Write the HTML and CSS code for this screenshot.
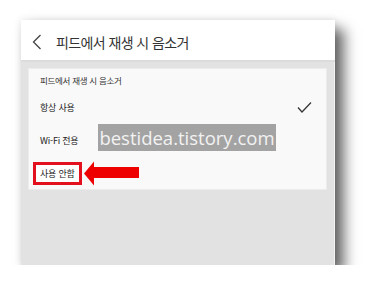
FILE: index.html
```html
<!DOCTYPE html>
<html lang="ko">
<head>
<meta charset="utf-8">
<link rel="stylesheet" href="styles.css">
</head>
<body>
<div class="frame">
  <div class="header">
    <svg class="back" width="10" height="16" viewBox="0 0 10 16"><path d="M8.5 1 L1.5 8 L8.5 15" fill="none" stroke="#444" stroke-width="1.3"/></svg>
    <span class="title">피드에서 재생 시 음소거</span>
  </div>
  <div class="content">
    <div class="card">
      <div class="label">피드에서 재생 시 음소거</div>
      <div class="row">
        <span>항상 사용</span>
        <svg class="check" width="15" height="13" viewBox="0 0 15 13"><path d="M1 6.5 L5 11 L14 1.5" fill="none" stroke="#333" stroke-width="1.2"/></svg>
      </div>
      <div class="row"><span>Wi-Fi 전용</span></div>
      <div class="row row-marked">
        <span class="highlight">사용 안함</span>
        <svg class="arrow" width="56" height="25" viewBox="0 0 56 25"><polygon points="0,12.5 10,0.5 10,6 55,6 55,17 10,17 10,24.5" fill="#ee0000"/></svg>
      </div>
      <div class="watermark">bestidea.tistory.com</div>
    </div>
  </div>
</div>
</body>
</html>
```
FILE: styles.css
```css
html, body {
  margin: 0;
  padding: 0;
  background: #ffffff;
}
body {
  font-family: "Noto Sans CJK KR", "Noto Sans", sans-serif;
  color: #222;
}
.frame {
  margin: 20px 0 0 21px;
  width: 314px;
  height: 245px;
  display: flex;
  flex-direction: column;
  box-shadow: 9px 9px 13px rgba(0,0,0,0.6), 0 0 8px rgba(0,0,0,0.10);
}
.header {
  height: 40px;
  background: #ffffff;
  border-bottom: 2px solid #dcdcdc;
  display: flex;
  align-items: center;
  padding-left: 11px;
  box-sizing: content-box;
}
.back {
  margin-top: 4px;
}
.title {
  margin-left: 14px;
  margin-top: 4px;
  font-size: 14px;
  letter-spacing: -0.6px;
  color: #333;
}
.content {
  flex: 1;
  background: #e2e2e2;
  padding: 6px 7px 0 7px;
  border-right: 1px solid #f4f4f4;
}
.card {
  position: relative;
  height: 120px;
  background: #f9f9f9;
  border: 1px solid #ececec;
  padding-left: 11px;
  padding-right: 14px;
}
.label {
  height: 22px;
  display: flex;
  align-items: center;
  font-size: 8.5px;
  letter-spacing: -0.3px;
  color: #333;
}
.row {
  height: 33px;
  display: flex;
  align-items: center;
  justify-content: space-between;
  font-size: 9px;
  letter-spacing: -0.2px;
  color: #222;
}
.row-marked {
  justify-content: flex-start;
  gap: 2px;
}
.highlight {
  display: inline-block;
  margin-left: -7px;
  padding: 2px 4px;
  border: 3px solid #e3101e;
  background: #ffffff;
  line-height: 13px;
}
.watermark {
  position: absolute;
  left: 69px;
  top: 55px;
  width: 178px;
  height: 27px;
  background: #a3a3a3;
  color: #f2f2f2;
  font-family: "Open Sans", "Noto Sans", sans-serif;
  font-size: 18.5px;
  line-height: 27px;
  text-align: center;
}
```
